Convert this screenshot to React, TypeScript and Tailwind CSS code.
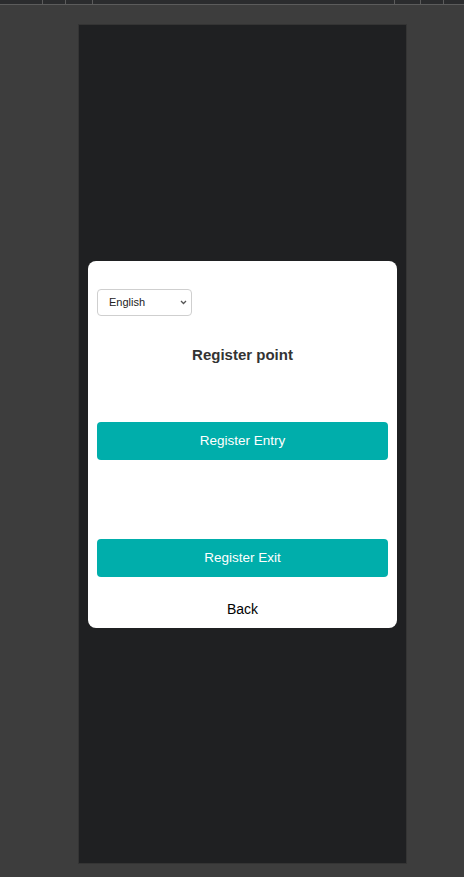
import React from "react";

const ticks = [42, 65, 92, 394, 420, 443];

const App = () => {
  return (
    <div
      className="w-[464px] h-[877px] bg-[#3d3d3d] flex flex-col overflow-hidden"
      style={{ fontFamily: '"Liberation Sans", Arial, sans-serif' }}
    >
      {/* ruler */}
      <div className="relative h-[5px] bg-[#2b2c2e] border-b border-[#5c5c5c] shrink-0">
        {ticks.map((x) => (
          <span
            key={x}
            className="absolute top-0 w-px h-[4px] bg-[#5c5c5c]"
            style={{ left: x }}
          />
        ))}
      </div>

      <div className="flex justify-start pl-[78px] pt-[19px]">
        <div className="w-[329px] h-[840px] bg-[#1f2022] border border-[#343434] flex items-center pl-[9px]">
          <div className="w-[309px] bg-white rounded-[8px] pt-[28px] px-[9px] pb-[11px] flex flex-col mt-[1px]">
            <div className="relative w-[95px] h-[27px]">
              <select className="appearance-none w-full h-full rounded-[4px] border border-[#cfcfcf] bg-white pl-[11px] text-[11px] text-[#222] outline-none">
                <option>English</option>
                <option>Español</option>
              </select>
              <svg
                className="absolute right-[5px] top-[11px] pointer-events-none"
                width="7"
                height="5"
                viewBox="0 0 7 5"
                fill="none"
              >
                <path d="M1 1l2.5 2.5L6 1" stroke="#555" strokeWidth="1.3" />
              </svg>
            </div>

            <h1 className="mt-[30px] text-center text-[15px] leading-[18px] font-bold text-[#333]">
              Register point
            </h1>

            <button className="mt-[58px] h-[38px] rounded-[4px] bg-[#00aeab] text-white text-[13.5px]">
              Register Entry
            </button>

            <button className="mt-[79px] h-[38px] rounded-[4px] bg-[#00aeab] text-white text-[13.5px]">
              Register Exit
            </button>

            <button className="mt-[24px] h-[16px] text-[14px] leading-[16px] text-black">
              Back
            </button>
          </div>
        </div>
      </div>
    </div>
  );
};

export default App;
